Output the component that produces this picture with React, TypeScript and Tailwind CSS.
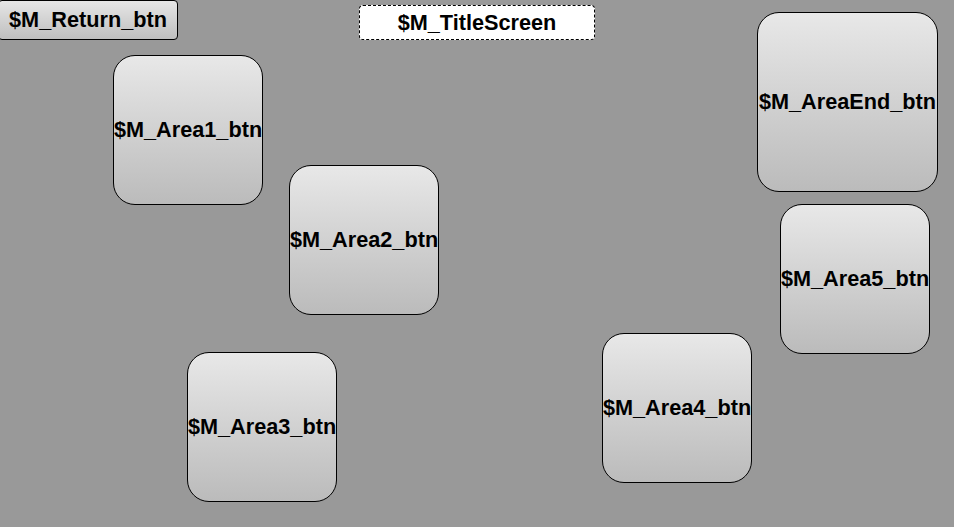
const areas = [
  { label: "$M_Area1_btn", pos: "left-[113px] top-[55px] w-[150px] h-[150px]" },
  { label: "$M_Area2_btn", pos: "left-[289px] top-[165px] w-[150px] h-[150px]" },
  { label: "$M_Area3_btn", pos: "left-[187px] top-[352px] w-[150px] h-[150px]" },
  { label: "$M_Area4_btn", pos: "left-[602px] top-[333px] w-[150px] h-[150px]" },
  { label: "$M_Area5_btn", pos: "left-[780px] top-[204px] w-[150px] h-[150px]" },
  { label: "$M_AreaEnd_btn", pos: "left-[757px] top-[12px] w-[181px] h-[180px]" },
]

export default function App() {
  return (
    <div
      className="relative w-[954px] h-[527px] overflow-hidden bg-[#999999] text-black font-bold text-[21.7px] leading-none"
      style={{ fontFamily: '"Liberation Sans", Arial, sans-serif' }}
    >
      {/* top bar */}
      <button className="absolute left-[-2px] top-[0px] w-[180px] h-[40px] flex items-center justify-center rounded-[4px] border border-black bg-gradient-to-b from-[#e6e6e6] to-[#bfbfbf]">
        $M_Return_btn
      </button>
      <div className="absolute left-[359px] top-[5px] w-[236px] h-[35px] flex items-center justify-center rounded-[4px] border border-dashed border-black bg-white">
        $M_TitleScreen
      </div>

      {/* area buttons */}
      {areas.map((a) => (
        <button
          key={a.label}
          className={`absolute ${a.pos} flex items-center justify-center whitespace-nowrap rounded-[22px] border border-black bg-gradient-to-b from-[#e8e8e8] to-[#bbbbbb]`}
        >
          {a.label}
        </button>
      ))}
    </div>
  )
}
